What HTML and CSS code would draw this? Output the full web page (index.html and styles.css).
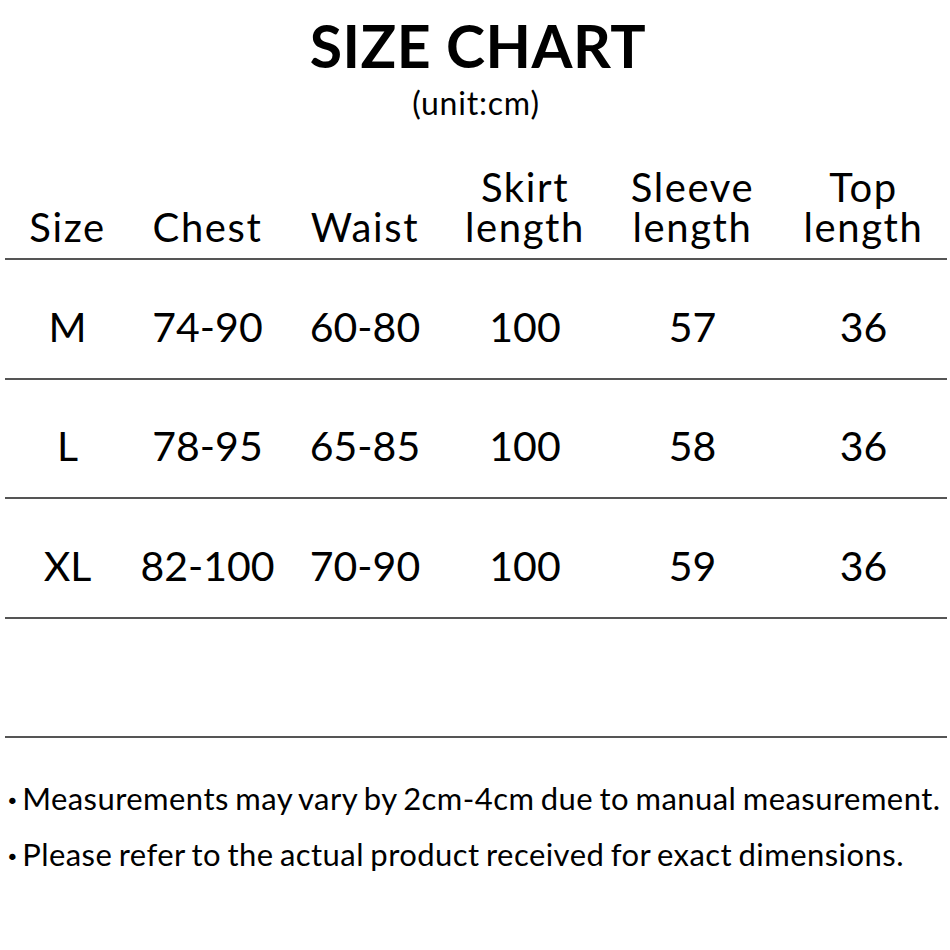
FILE: index.html
```html
<!DOCTYPE html>
<html>
<head>
<meta charset="utf-8">
<link rel="stylesheet" href="styles.css">
</head>
<body>
<div class="page">
  <header class="head">
    <h1 class="title">SIZE CHART</h1>
    <div class="unit">(unit:cm)</div>
  </header>
  <div class="chart">
    <div class="row hrow">
      <div class="cell">Size</div>
      <div class="cell">Chest</div>
      <div class="cell">Waist</div>
      <div class="cell">Skirt<br>length</div>
      <div class="cell">Sleeve<br>length</div>
      <div class="cell">Top<br>length</div>
    </div>
    <div class="row drow">
      <div class="cell">M</div>
      <div class="cell">74-90</div>
      <div class="cell">60-80</div>
      <div class="cell">100</div>
      <div class="cell">57</div>
      <div class="cell">36</div>
    </div>
    <div class="row drow">
      <div class="cell">L</div>
      <div class="cell">78-95</div>
      <div class="cell">65-85</div>
      <div class="cell">100</div>
      <div class="cell">58</div>
      <div class="cell">36</div>
    </div>
    <div class="row drow">
      <div class="cell">XL</div>
      <div class="cell">82-100</div>
      <div class="cell">70-90</div>
      <div class="cell">100</div>
      <div class="cell">59</div>
      <div class="cell">36</div>
    </div>
    <div class="row drow"></div>
  </div>
  <ul class="notes">
    <li>Measurements may vary by 2cm-4cm due to manual measurement.</li>
    <li>Please refer to the actual product received for exact dimensions.</li>
  </ul>
</div>
</body>
</html>
```
FILE: styles.css
```css
html, body {
  margin: 0;
  padding: 0;
  background: #ffffff;
}
body {
  width: 950px;
  height: 950px;
  overflow: hidden;
  font-family: "Lato", "Open Sans", sans-serif;
  color: #000;
}
.page {
  padding: 0 3px 0 5px;
}
.head {
  display: flex;
  flex-direction: column;
  align-items: center;
  padding-top: 16px;
}
.title {
  margin: 0;
  font-size: 59px;
  line-height: 1;
  font-weight: 700;
  letter-spacing: 0.5px;
  padding-left: 4px;
}
.unit {
  margin-top: 12px;
  font-size: 32px;
  line-height: 1;
  letter-spacing: 0.8px;
}
.chart {
  margin-top: 34px;
}
.row {
  display: grid;
  grid-template-columns: 125px 155px 160px 160px 175px 167px;
  border-bottom: 2px solid #555;
}
.hrow {
  align-items: end;
  padding-bottom: 11px;
  box-sizing: border-box;
  height: 107px;
}
.drow {
  height: 119.5px;
  align-items: center;
  padding-top: 16px;
  box-sizing: border-box;
}
.cell {
  text-align: center;
  font-size: 41px;
  line-height: 40px;
}
.hrow .cell {
  font-size: 40px;
  letter-spacing: 1.6px;
}
.notes {
  list-style: none;
  margin: 0;
  padding: 32px 0 0 3px;
}
.notes li {
  font-size: 31px;
  line-height: 56px;
  letter-spacing: 0.45px;
  word-spacing: -2px;
  white-space: nowrap;
}
.notes li::before {
  content: "\00B7";
  font-weight: 900;
  margin-right: 5px;
}
```
